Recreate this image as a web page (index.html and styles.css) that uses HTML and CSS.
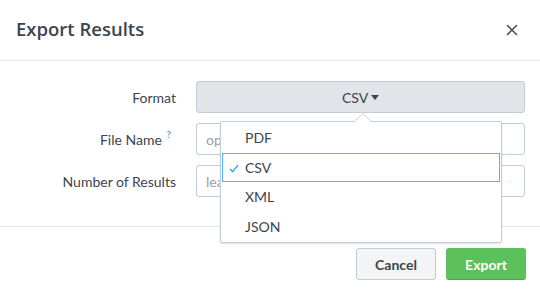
FILE: index.html
```html
<!DOCTYPE html>
<html>
<head>
<meta charset="utf-8">
<link rel="stylesheet" href="styles.css">
</head>
<body>
<div class="modal">
  <div class="header">
    <h1 class="title">Export Results</h1>
    <span class="close">
      <svg width="12" height="12" viewBox="0 0 12 12"><path d="M1.5 1.5 L10.5 10.5 M10.5 1.5 L1.5 10.5" stroke="#4a525c" stroke-width="1.6" stroke-linecap="round"/></svg>
    </span>
  </div>
  <div class="body">
    <div class="row">
      <label class="label">Format</label>
      <button class="select">CSV <span class="caret"></span></button>
    </div>
    <div class="row">
      <label class="label label-help">File Name <sup class="help">?</sup></label>
      <div class="input placeholder">op</div>
    </div>
    <div class="row">
      <label class="label">Number of Results</label>
      <div class="input placeholder">lea</div>
    </div>
    <div class="menu">
      <div class="menu-arrow"></div>
      <div class="item">PDF</div>
      <div class="item selected"><span class="check">
        <svg width="10" height="9" viewBox="0 0 10 9"><path d="M1 5 L3.6 7.6 L9 1.2" fill="none" stroke="#1a9fe0" stroke-width="1.3"/></svg>
      </span>CSV</div>
      <div class="item">XML</div>
      <div class="item">JSON</div>
    </div>
  </div>
  <div class="footer">
    <button class="btn btn-default">Cancel</button>
    <button class="btn btn-primary">Export</button>
  </div>
</div>
</body>
</html>
```
FILE: styles.css
```css
* { box-sizing: border-box; }
html, body { margin: 0; padding: 0; background: #fff; }
body {
  font-family: Lato, "Open Sans", sans-serif;
  color: #3c444d;
  width: 540px;
  height: 296px;
  overflow: hidden;
}
.modal { width: 540px; }
.header {
  height: 61px;
  display: flex;
  align-items: center;
  justify-content: space-between;
  padding: 0 22px 0 16px;
  border-bottom: 1px solid #e1e6eb;
}
.title {
  margin: 0;
  font-family: "Open Sans", Lato, sans-serif;
  font-size: 18.5px;
  font-weight: 600;
  color: #3c444d;
  position: relative;
  top: -2px;
}
.close { display: flex; position: relative; top: 0; }
.body {
  position: relative;
  padding: 20px 15px 29px 0;
  display: flex;
  flex-direction: column;
  gap: 10px;
  border-bottom: 1px solid #e1e6eb;
}
.row {
  display: grid;
  grid-template-columns: 176px 1fr;
  column-gap: 20px;
  align-items: center;
  height: 32px;
}
.label {
  text-align: right;
  font-size: 14px;
  color: #3c444d;
}
.label-help { padding-right: 5px; position: relative; top: -1px; }
.help {
  color: #5f9fd0;
  font-size: 10px;
  font-weight: 700;
  position: relative;
  top: -1px;
  margin-left: 1px;
}
.select {
  height: 32px;
  width: 100%;
  border: 1px solid #c3cbd4;
  border-radius: 3px;
  background: #e1e4e8;
  font-family: inherit;
  font-size: 14px;
  color: #3c444d;
  display: flex;
  align-items: center;
  justify-content: center;
  gap: 3px;
  padding: 0;
}
.caret {
  display: inline-block;
  width: 0; height: 0;
  border-left: 4px solid transparent;
  border-right: 4px solid transparent;
  border-top: 5px solid #3c444d;
}
.input {
  height: 32px;
  border: 1px solid #c3cbd4;
  border-radius: 3px;
  padding: 0 9px;
  display: flex;
  align-items: center;
  font-size: 14px;
  white-space: nowrap;
  overflow: hidden;
}
.placeholder { color: #9aa1a8; }
.menu {
  position: absolute;
  left: 220px;
  top: 60px;
  width: 282px;
  height: 122px;
  background: #fff;
  border: 1px solid #c3cbd4;
  border-radius: 2px;
  box-shadow: 0 1px 2px rgba(0,0,0,0.12);
  padding: 1px;
  display: flex;
  flex-direction: column;
}
.menu-arrow {
  position: absolute;
  top: -7px;
  left: 136px;
  width: 12px;
  height: 12px;
  background: #fff;
  border-left: 1px solid #d5dbe1;
  border-top: 1px solid #d5dbe1;
  transform: rotate(45deg);
}
.item {
  height: 30px;
  display: flex;
  align-items: center;
  padding-left: 23px;
  font-size: 14px;
  color: #3c444d;
  position: relative;
}
.item.selected {
  border: 1px solid #4fb6f0;
  height: 29px;
  padding-left: 22px;
}
.check {
  position: absolute;
  left: 6px;
  top: 10px;
  display: flex;
}
.footer {
  display: flex;
  justify-content: flex-end;
  gap: 10px;
  padding: 21px 14px 0 0;
}
.btn {
  width: 80px;
  height: 32px;
  border-radius: 3px;
  font-family: inherit;
  font-size: 14px;
  font-weight: 700;
  padding: 0;
}
.btn-default {
  background: #f2f4f5;
  border: 1px solid #c3cbd4;
  color: #3c444d;
}
.btn-primary {
  background: #5cc05c;
  border: 1px solid #5cc05c;
  border-bottom-color: #4aa84a;
  color: #fff;
}
```
